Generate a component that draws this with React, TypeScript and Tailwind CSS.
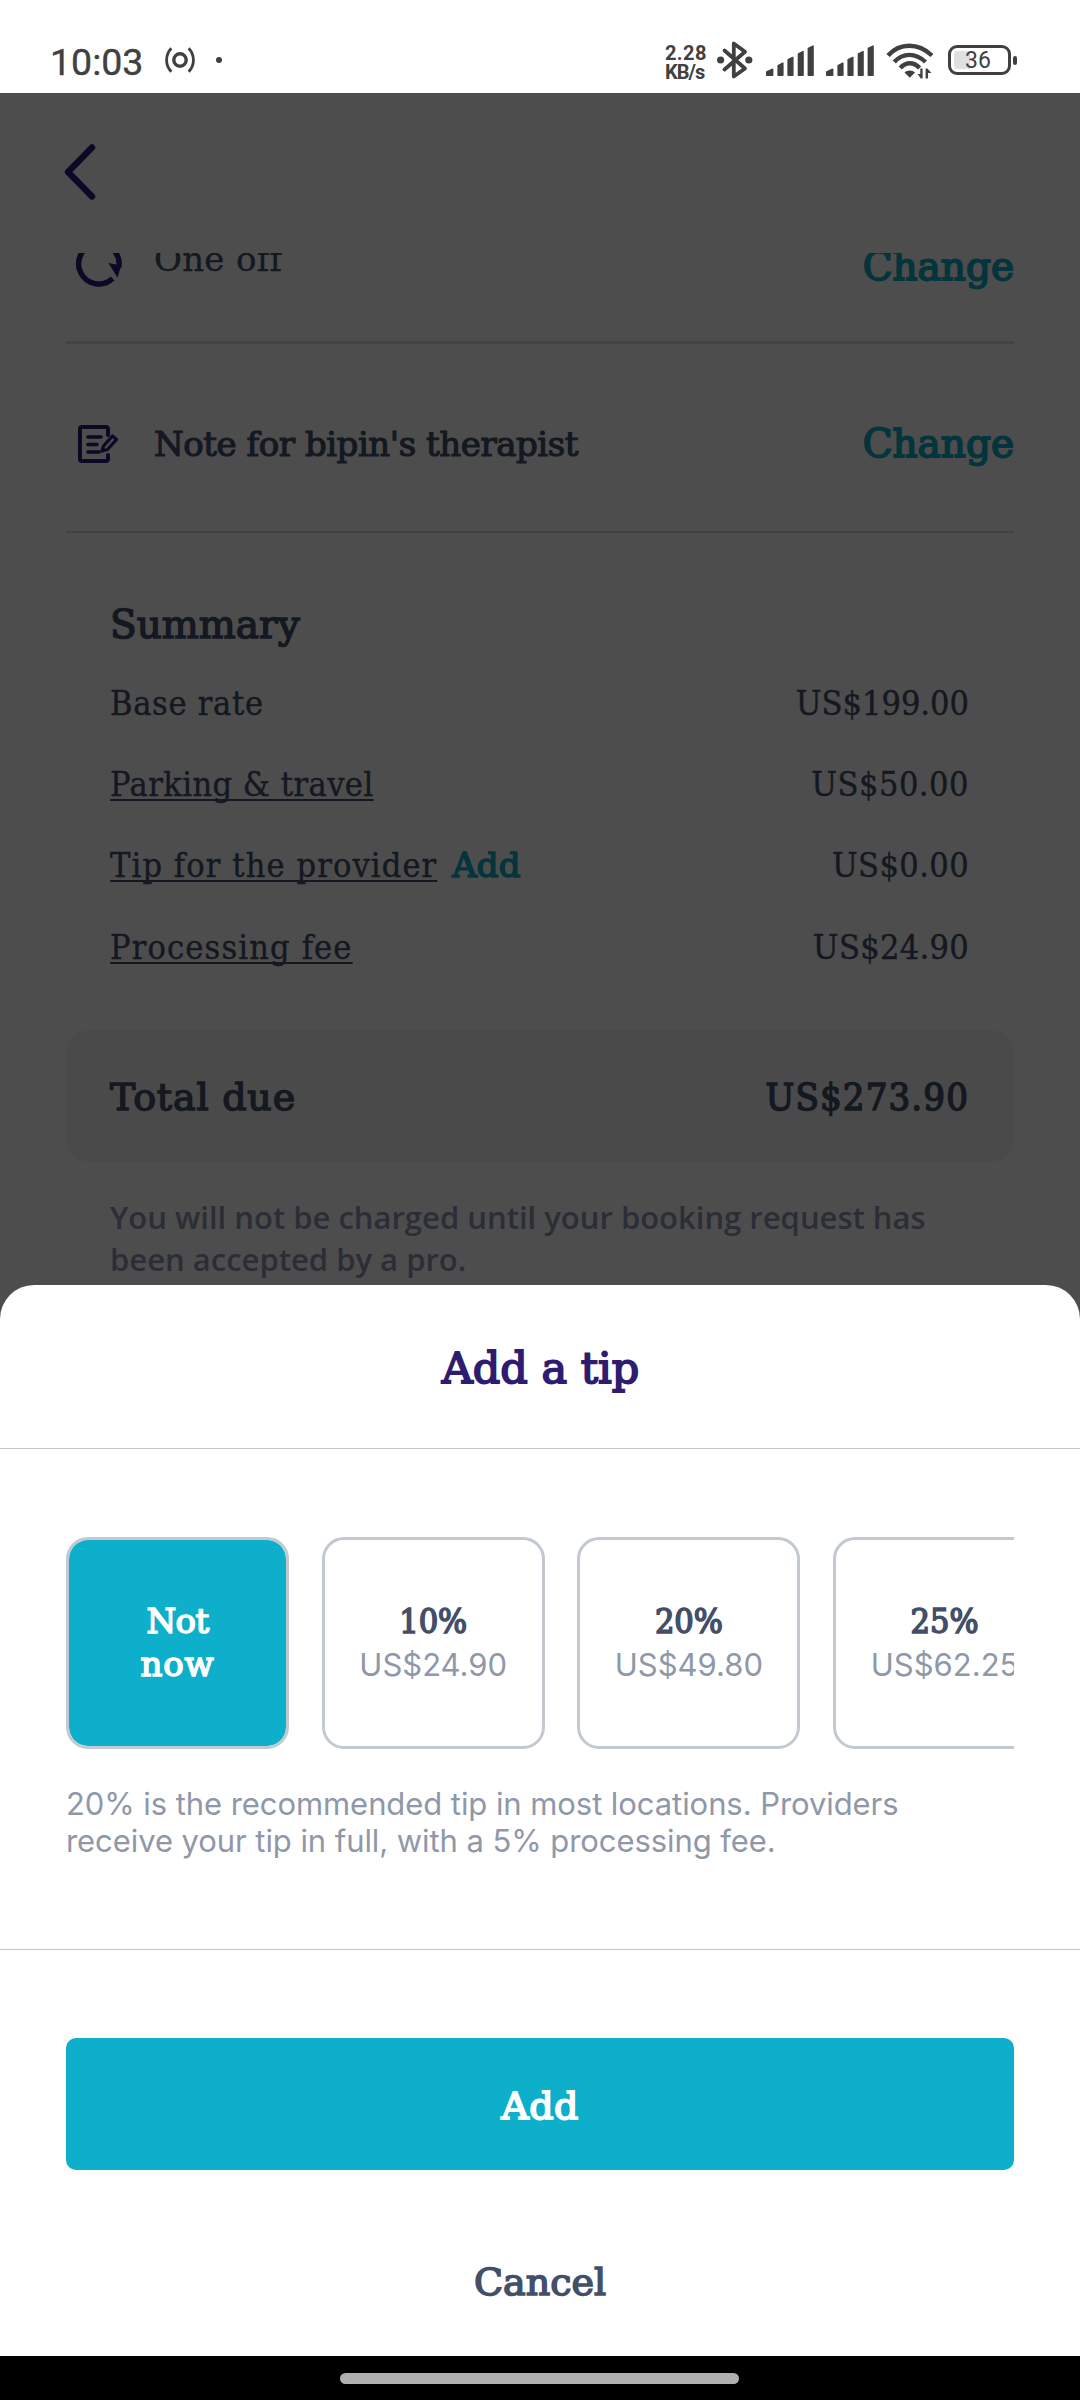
import type { ReactNode } from "react";

const INK = "#404040";

function BroadcastIcon() {
  return (
    <svg width="32" height="26" viewBox="0 0 32 26" fill="none" stroke={INK}>
      <circle cx="16" cy="13" r="6.2" strokeWidth="3.4" />
      <path d="M7.3 1.2 C1 8 1 18 7.3 24.8" strokeWidth="2.8" />
      <path d="M24.7 1.2 C31 8 31 18 24.7 24.8" strokeWidth="2.8" />
    </svg>
  );
}

function BluetoothIcon() {
  return (
    <svg width="38" height="40" viewBox="0 0 38 40" fill="none" stroke={INK} strokeWidth="3.8" strokeLinejoin="round" strokeLinecap="round">
      <path d="M8.5 10.5 L29 28.5 L17.8 36.5 V3.5 L29 11.8 L8.5 29.5" />
      <circle cx="4.6" cy="20" r="3.6" fill={INK} stroke="none" />
      <circle cx="32.8" cy="20" r="3.6" fill={INK} stroke="none" />
    </svg>
  );
}

function SignalIcon() {
  return (
    <svg width="48" height="32" viewBox="0 0 48 32" fill={INK} stroke={INK} strokeWidth="1.6" strokeLinejoin="round">
      <path d="M0.8 30.2 V27 L6.6 24.3 V30.2 Z" />
      <path d="M12.2 30.2 V20.6 L16.8 18.2 V30.2 Z" />
      <path d="M22.2 30.2 V14.8 L26.8 12.5 V30.2 Z" />
      <path d="M32.5 30.2 V9 L37 6.7 V30.2 Z" />
      <path d="M42.4 30.2 V3.5 L47 1.2 V30.2 Z" />
    </svg>
  );
}

function WifiIcon() {
  return (
    <svg width="48" height="36" viewBox="0 0 48 36" fill="none" stroke={INK} strokeWidth="4.4">
      <path d="M2 12.5 C14 -0.5 32 -0.5 46 12.5" />
      <path d="M8.3 19 C17 9.5 29.5 9.5 39.5 19" />
      <path d="M14.3 25 C20 18.6 27.5 18.6 33.6 25" />
      <path d="M18.5 29.5 C21 26.8 26.5 26.8 29 29.5 L23.8 34.8 Z" fill={INK} stroke="none" />
      <path d="M36.6 25.5 V35.5 H34.8 L31.6 31 H34.3 V25.5 Z M39.6 35.5 V25.5 H41.4 L45.4 30 H42 V35.5 Z" fill={INK} stroke="none" />
    </svg>
  );
}

function BatteryIcon() {
  return (
    <div className="flex items-center">
      <div className="flex h-[30px] w-[63px] rounded-[9px] border-[3px] border-[#404040] p-[3px]">
        <div className="relative h-full w-[16px] rounded-l-[3px] bg-[#e0e0e0]">
          <span className="absolute top-0 left-[11px] text-[23px] leading-[20px] text-[#404040]">36</span>
        </div>
      </div>
      <div className="ml-[2px] h-[9px] w-[4px] rounded-[2px] bg-[#404040]" />
    </div>
  );
}

function StatusBar() {
  return (
    <div className="flex h-[93px] shrink-0 items-start bg-white font-['Roboto',sans-serif] text-[#404040]">
      <span className="ml-[50px] mt-[41px] w-[93px] text-[37.5px] leading-[42px] [-webkit-text-stroke:0.4px_#404040]">10:03</span>
      <div className="ml-[21px] mt-[47px]"><BroadcastIcon /></div>
      <div className="ml-[20px] mt-[57px] size-[6px] rounded-full bg-[#404040]" />
      <div className="ml-[443px] mt-[44px] w-[51px] text-[20px] font-bold leading-[19px]">
        <div className="tracking-[0.4px]">2.28</div>
        <div className="tracking-[-1px]">KB/s</div>
      </div>
      <div className="mt-[40px]"><BluetoothIcon /></div>
      <div className="ml-[12px] mt-[45px]"><SignalIcon /></div>
      <div className="ml-[12px] mt-[45px]"><SignalIcon /></div>
      <div className="ml-[12px] mt-[43px]"><WifiIcon /></div>
      <div className="ml-[14px] mt-[45px]"><BatteryIcon /></div>
    </div>
  );
}

function RepeatIcon() {
  return (
    <svg width="48" height="48" viewBox="0 0 48 48" fill="none">
      <path d="M37.6 38.6 A20.2 20.2 0 1 1 43.6 28" stroke="#0f0726" strokeWidth="5.4" />
      <path d="M33.5 23 L46 25.5 L42.6 37.8 Z" fill="#0f0726" />
    </svg>
  );
}

function NoteIcon() {
  return (
    <svg width="41" height="38" viewBox="0 0 41 38" fill="none" stroke="#0f0726" strokeWidth="4" strokeLinecap="round" strokeLinejoin="round">
      <path d="M30 10 V4 Q30 2 28 2 H4 Q2 2 2 4 V34 Q2 36 4 36 H28 Q30 36 30 34 V30" />
      <path d="M10 12 H23 M10 19.5 H19 M10 27 H21" strokeWidth="3.6" />
      <path d="M24 26 L25.5 21 L34.5 11 L38.5 14.5 L29.5 24.5 Z" strokeWidth="3.2" />
    </svg>
  );
}

function PriceRow({ label, price, action }: { label: ReactNode; price: ReactNode; action?: boolean }) {
  return (
    <div className="flex h-[81.33px] items-center text-[34px] leading-[40px] [-webkit-text-stroke:0.4px_#141821]">
      {label}
      {action && (
        <span className="ml-[15px] font-['DejaVu_Serif',serif] text-[#04343c] [-webkit-text-stroke:1.6px_#04343c]">Add</span>
      )}
      <span className="ml-auto">{price}</span>
    </div>
  );
}

function Tip({ percent, amount }: { percent: string; amount: string }) {
  return (
    <div className="flex h-[212px] w-[223px] shrink-0 flex-col items-center justify-center rounded-[22px] border-[3px] border-[#c3c9d1]">
      <span className="text-[34px] leading-[43px] text-[#434f69] [-webkit-text-stroke:1.6px_#434f69]">{percent}</span>
      <span className="font-['Inter',sans-serif] text-[31px] leading-[43px] text-[#8f98a9]">{amount}</span>
    </div>
  );
}

export default function App() {
  return (
    <div className="flex h-[2400px] w-[1080px] flex-col overflow-hidden bg-white font-['DejaVu_Serif_Condensed','DejaVu_Serif',serif]">
      <StatusBar />

      <main className="h-[1237px] shrink-0 overflow-hidden bg-[#4d4d4d] text-[#141821]">
        <header className="h-[160px] pl-[62px] pt-[49px]">
          <svg width="36" height="60" viewBox="0 0 36 60" fill="none" stroke="#0f0726" strokeWidth="6.4" strokeLinecap="round" strokeLinejoin="round">
            <path d="M30 5.5 L6 30 L30 54.5" />
          </svg>
        </header>

        <div className="overflow-hidden px-[66px]">
          <div className="-mt-[66px] box-content flex h-[154px] items-center border-b-[3px] border-[#434343]">
            <div className="ml-[9px]"><RepeatIcon /></div>
            <span className="ml-[31px] pb-[10px] font-['DejaVu_Serif',serif] text-[34px] leading-[40px] tracking-[0.3px] [-webkit-text-stroke:0.3px_#141821]">One off</span>
            <span className="ml-auto pt-[6px] font-['DejaVu_Serif',serif] text-[39px] leading-[44px] text-[#04343c] [-webkit-text-stroke:1.8px_#04343c]">Change</span>
          </div>
          <div className="box-content flex h-[174px] items-center border-b-2 border-[#434343] pt-[13px]">
            <div className="ml-[12px]"><NoteIcon /></div>
            <span className="ml-[35px] font-['DejaVu_Serif',serif] text-[34px] leading-[40px] tracking-[-0.45px] [-webkit-text-stroke:1.2px_#141821]">Note for bipin's therapist</span>
            <span className="ml-auto font-['DejaVu_Serif',serif] text-[39px] leading-[44px] text-[#04343c] [-webkit-text-stroke:1.8px_#04343c]">Change</span>
          </div>

          <section className="pl-[44px] pr-[45px] pt-[62px]">
            <h2 className="h-[67px] font-['DejaVu_Serif',serif] text-[39px] leading-[60px] [-webkit-text-stroke:1.5px_#141821]">Summary</h2>
            <PriceRow label={<span className="tracking-[0.7px]">Base rate</span>} price={<span>US$199.00</span>} />
            <PriceRow
              label={<span className="tracking-[0.45px] underline decoration-2 underline-offset-[3px] [text-decoration-skip-ink:none]">Parking &amp; travel</span>}
              price={<span className="tracking-[0.5px]">US$50.00</span>}
            />
            <PriceRow
              label={<span className="tracking-[1.1px] underline decoration-2 underline-offset-[3px] [text-decoration-skip-ink:none]">Tip for the provider</span>}
              price={<span className="tracking-[0.4px]">US$0.00</span>}
              action
            />
            <PriceRow
              label={<span className="tracking-[1.15px] underline decoration-2 underline-offset-[3px] [text-decoration-skip-ink:none]">Processing fee</span>}
              price={<span className="tracking-[0.3px]">US$24.90</span>}
            />
          </section>

          <div className="mt-[43px] flex h-[132px] items-center rounded-[22px] bg-[#4a4a4a] pl-[44px] pr-[45px] pt-[2px] text-[38px] leading-[44px] [-webkit-text-stroke:1.5px_#141821]">
            <span className="font-['DejaVu_Serif',serif] tracking-[0.8px]">Total due</span>
            <span className="ml-auto tracking-[1.1px]">US$273.90</span>
          </div>

          <p className="mt-[34px] pl-[44px] font-['Open_Sans',sans-serif] text-[31px] font-semibold leading-[42px] text-[#2b2e36]">
            You will not be charged until your booking request has<br />been accepted by a pro.
          </p>
        </div>
      </main>

      <section className="relative -mt-[45px] h-[1071px] shrink-0 rounded-t-[34px] bg-white">
        <h1 className="h-[163px] pl-px pt-[53px] text-center font-['DejaVu_Serif',serif] text-[43px] leading-[60px] text-[#2e1c70] [-webkit-text-stroke:1.8px_#2e1c70]">Add a tip</h1>
        <div className="h-[502px] border-y border-[#c4c6ca] px-[66px] pt-[88px]">
          <div className="flex gap-[32.7px] overflow-hidden">
            <div className="flex h-[212px] w-[223px] shrink-0 flex-col items-center justify-center rounded-[22px] border-[3px] border-[#c3c9d1] bg-[#0dafca] bg-clip-padding text-center font-['DejaVu_Serif',serif] text-[34px] leading-[43px] text-white [-webkit-text-stroke:1.6px_white]">
              <span className="tracking-[-0.6px]">Not</span>
              <span className="tracking-[0.8px]">now</span>
            </div>
            <Tip percent="10%" amount="US$24.90" />
            <Tip percent="20%" amount="US$49.80" />
            <Tip percent="25%" amount="US$62.25" />
          </div>
          <p className="mt-[36px] font-['Inter',sans-serif] text-[31px] leading-[37px] tracking-[-0.07px] text-[#8f98a9]">
            20% is the recommended tip in most locations. Providers<br />receive your tip in full, with a 5% processing fee.
          </p>
        </div>
        <div className="flex flex-col gap-[44px] px-[66px] pt-[88px] font-['DejaVu_Serif',serif] text-[38px] leading-[44px]">
          <button className="h-[132px] rounded-[10px] bg-[#0dafca] pt-[3px] tracking-[0.5px] text-white [-webkit-text-stroke:1.8px_white]">Add</button>
          <button className="h-[132px] pt-[3px] text-[#434f69] [-webkit-text-stroke:1.6px_#434f69]">Cancel</button>
        </div>
      </section>

      <div className="flex h-[44px] shrink-0 justify-center bg-black pt-[17px]">
        <div className="mr-px h-[11px] w-[399px] rounded-full bg-[#b0b0b0]" />
      </div>
    </div>
  );
}
